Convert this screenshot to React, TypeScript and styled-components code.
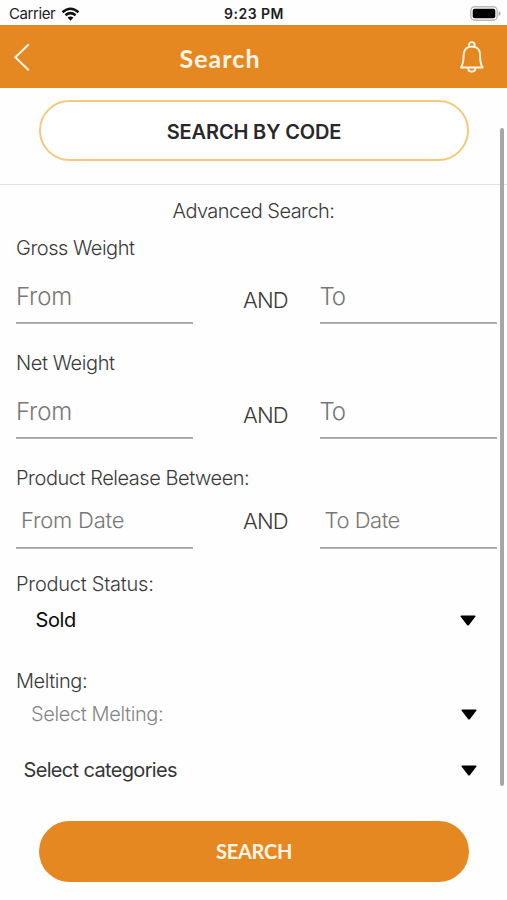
import React from "react";
import styled, { createGlobalStyle } from "styled-components";

const GlobalStyle = createGlobalStyle`
  * { box-sizing: border-box; }
  body { margin: 0; background: #fefefe; font-family: Inter, "Liberation Sans", sans-serif; }
  button, input { font: inherit; margin: 0; padding: 0; }
`;

const ORANGE = "#e68822";

const Screen = styled.div`
  position: relative;
  width: 507px;
  height: 900px;
  overflow: hidden;
  display: flex;
  flex-direction: column;
  background: #fefefe;
`;

const StatusBar = styled.div`
  height: 25px;
  flex: none;
  display: grid;
  grid-template-columns: 1fr auto 1fr;
  align-items: center;
  padding: 2px 6px 0 9px;
  line-height: 24px;
  color: #222;
`;

const Carrier = styled.div`
  display: flex;
  align-items: center;
  gap: 6px;
  font-size: 15px;
  letter-spacing: -0.42px;
`;

const Clock = styled.div`
  margin-left: -2px;
  font-size: 14px;
  font-weight: 600;
  letter-spacing: 0.5px;
  color: #1c1c1c;
`;

const Battery = styled.svg`
  justify-self: end;
`;

const Header = styled.header`
  height: 63px;
  flex: none;
  display: grid;
  grid-template-columns: 36px 1fr 36px;
  align-items: center;
  padding: 2px 19px 0 13px;
  background: ${ORANGE};
`;

const IconButton = styled.button`
  display: flex;
  border: 0;
  background: none;
  color: #fff6e8;
`;

const Title = styled.h1`
  margin: 0 61px 0 0;
  text-align: center;
  font: 700 25px/30px Lato, sans-serif;
  letter-spacing: 1.05px;
  color: #fff6e8;
`;

const CodeSection = styled.section`
  height: 97px;
  flex: none;
  padding: 12px 38px 0 39px;
  border-bottom: 1px solid #e2e2e2;
`;

const CodeButton = styled.button`
  width: 100%;
  height: 61px;
  padding-top: 2px;
  border: 2px solid #f5c880;
  border-radius: 31px;
  background: #fff;
  font-size: 20px;
  font-weight: 600;
  letter-spacing: -0.15px;
  color: #282828;
`;

const Form = styled.form`
  display: flex;
  flex-direction: column;
  font-weight: 300;
  color: #3a3a3a;
`;

const Heading = styled.h2`
  margin: 14px 0 0;
  text-align: center;
  font-size: 20px;
  font-weight: 300;
  line-height: 24px;
  letter-spacing: -0.54px;
`;

const Label = styled.div<{ $top: number; $spacing: number }>`
  margin: ${(p) => p.$top}px 0 0 16px;
  font-size: 20px;
  line-height: 24px;
  letter-spacing: ${(p) => p.$spacing}px;
`;

const Range = styled.div<{ $height: number }>`
  height: ${(p) => p.$height}px;
  display: grid;
  grid-template-columns: 177px 126.6px 177px;
  margin-left: 16px;
`;

const Field = styled.input<{ $date?: boolean; $spacing: number }>`
  width: 100%;
  min-width: 0;
  height: 100%;
  border: 0;
  border-bottom: 1px solid #a4a4a4;
  border-radius: 0;
  background: none;
  outline: 0;
  padding: ${(p) => (p.$date ? "3px 0 0 5px" : "11px 0 0 0")};
  font-size: ${(p) => (p.$date ? 22 : 24)}px;
  font-weight: ${(p) => (p.$date ? 300 : 350)};
  letter-spacing: ${(p) => p.$spacing}px;
  box-shadow: 0 1px 0 #b4b4b4;
  &::placeholder { color: #777; opacity: 1; }
`;

const And = styled.div<{ $top: number }>`
  padding: ${(p) => p.$top}px 0 0 18px;
  text-align: center;
  font-size: 22px;
  line-height: 26px;
  letter-spacing: -0.95px;
`;

const Select = styled.button<{ $top: number; $left: number; $right: number; $tone: string; $weight: number; $spacing: number }>`
  display: flex;
  align-items: center;
  justify-content: space-between;
  height: 24px;
  margin: ${(p) => p.$top}px ${(p) => p.$right}px 0 ${(p) => p.$left}px;
  border: 0;
  background: none;
  font-size: 20px;
  line-height: 24px;
  font-weight: ${(p) => p.$weight};
  letter-spacing: ${(p) => p.$spacing}px;
  color: ${(p) => p.$tone};
`;

const SubmitButton = styled.button`
  height: 61px;
  margin: 39px 38px 0 39px;
  padding-bottom: 1px;
  border: 0;
  border-radius: 31px;
  background: ${ORANGE};
  font: 700 20px/24px Lato, sans-serif;
  letter-spacing: -0.25px;
  color: #fff6e8;
`;

const ScrollThumb = styled.div`
  position: absolute;
  top: 128px;
  right: 3.5px;
  width: 4px;
  height: 658px;
  border-radius: 2px;
  background: #a6a6a6;
`;

const Caret = () => (
  <svg width="16" height="11" viewBox="0 0 16 11">
    <path d="M1.2 .5h13.6q1.3 0 .5 1.2L9 10q-1 1.1-2 0L.7 1.7Q-.1.5 1.2.5z" fill="#000" />
  </svg>
);

interface RangeFieldsProps {
  from: string;
  to: string;
  date?: boolean;
}

const RangeFields = ({ from, to, date }: RangeFieldsProps) => (
  <>
    <Field placeholder={from} $date={date} $spacing={date ? -0.22 : -0.2} />
    <And $top={date ? 18 : 27}>AND</And>
    <Field placeholder={to} $date={date} $spacing={date ? -0.46 : -1.2} />
  </>
);

export default function App() {
  return (
    <Screen>
      <GlobalStyle />
      <StatusBar>
        <Carrier>
          Carrier
          <svg width="19" height="14" viewBox="0 0 18 14" fill="none" stroke="#111" strokeWidth="2.5">
            <path d="M1 5.2Q9-1.7 17 5.2M3.9 8.3Q9 4 14.1 8.3" />
            <path d="M6 10.6Q9 8.2 12 10.6L9 13.7z" fill="#111" stroke="none" />
          </svg>
        </Carrier>
        <Clock>9:23 PM</Clock>
        <Battery width="31" height="16" viewBox="0 0 31 16">
          <rect x=".8" y=".8" width="26.4" height="13.4" rx="4" fill="#fff" stroke="#b8b8b8" strokeWidth="1.4" />
          <rect x="2.7" y="2.7" width="22.6" height="9.6" rx="2" fill="#000" />
          <path d="M28.6 5.2q2 .7 2 2.4t-2 2.4z" fill="#aaa" />
        </Battery>
      </StatusBar>
      <Header>
        <IconButton aria-label="Back">
          <svg width="18" height="29" viewBox="0 0 18 29" fill="none" stroke="currentColor" strokeWidth="2">
            <path d="M15.8 1.2L2.3 14.2l13.5 13" />
          </svg>
        </IconButton>
        <Title>Search</Title>
        <IconButton aria-label="Notifications">
          <svg width="36" height="34" viewBox="0 0 36 34" fill="none" stroke="currentColor" strokeWidth="1.9" strokeLinejoin="round">
            <circle cx="19.8" cy="3.9" r="2.8" />
            <path d="M19.8 5.6c-5.8 0-8.2 3.8-8.2 8.3 0 6.6-.7 9.7-2.7 12.6h21.8c-2-2.9-2.7-6-2.7-12.6 0-4.5-2.4-8.3-8.2-8.3z" fill={ORANGE} />
            <path d="M16.1 26.8c0 5.2 7.4 5.2 7.4 0" />
          </svg>
        </IconButton>
      </Header>
      <CodeSection>
        <CodeButton>SEARCH BY CODE</CodeButton>
      </CodeSection>
      <Form onSubmit={(e) => e.preventDefault()}>
        <Heading>Advanced Search:</Heading>
        <Label $top={13} $spacing={-0.48}>Gross Weight</Label>
        <Range $height={63}>
          <RangeFields from="From" to="To" />
        </Range>
        <Label $top={28} $spacing={-0.42}>Net Weight</Label>
        <Range $height={63}>
          <RangeFields from="From" to="To" />
        </Range>
        <Label $top={28} $spacing={-0.46}>Product Release Between:</Label>
        <Range $height={58}>
          <RangeFields from="From Date" to="To Date" date />
        </Range>
        <Label $top={24} $spacing={-0.25}>Product Status:</Label>
        <Select type="button" $top={12} $left={35.5} $right={31} $tone="#0a0a0a" $weight={400} $spacing={-0.4}>
          Sold
          <Caret />
        </Select>
        <Label $top={37} $spacing={-0.45}>Melting:</Label>
        <Select type="button" $top={9} $left={31} $right={30} $tone="#858585" $weight={300} $spacing={-0.38}>
          Select Melting:
          <Caret />
        </Select>
        <Select type="button" $top={32} $left={23.5} $right={30} $tone="#363636" $weight={400} $spacing={-0.66}>
          Select categories
          <Caret />
        </Select>
        <SubmitButton type="submit">SEARCH</SubmitButton>
      </Form>
      <ScrollThumb />
    </Screen>
  );
}
